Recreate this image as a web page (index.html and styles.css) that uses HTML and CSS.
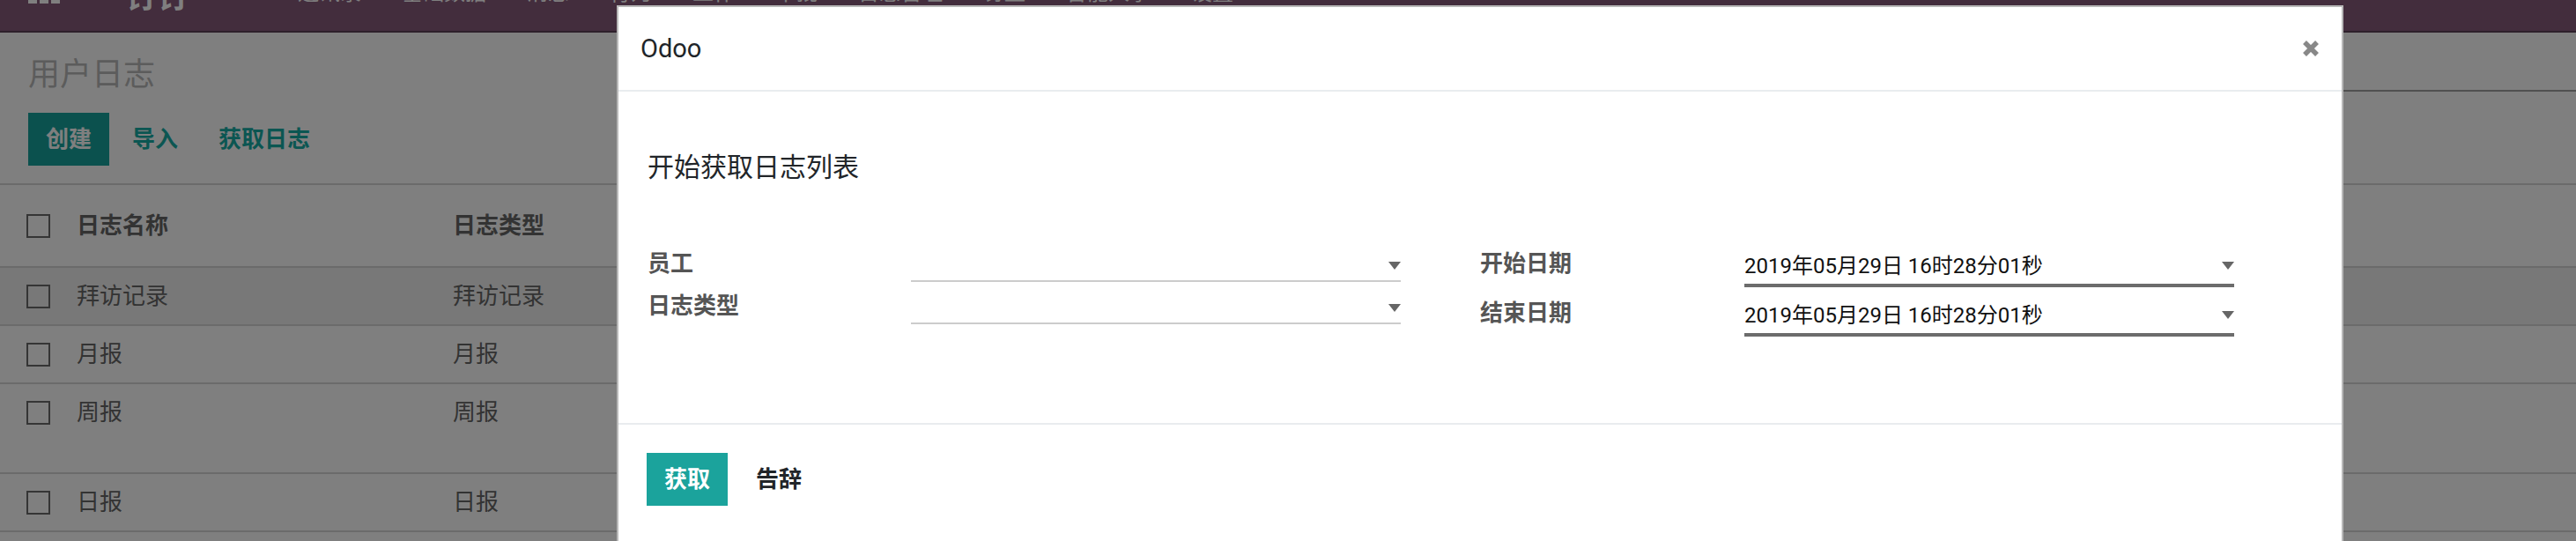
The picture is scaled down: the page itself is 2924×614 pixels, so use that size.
FILE: index.html
```html
<!DOCTYPE html>
<html lang="zh-CN">
<head>
<meta charset="utf-8">
<title>用户日志 - Odoo</title>
<link rel="stylesheet" href="styles.css">
</head>
<body>
<div class="app">
  <header class="navbar">
    <div class="nav-row">
      <span class="apps-icon">
        <svg viewBox="0 0 36 36" aria-hidden="true">
          <rect x="0" y="0" width="10" height="10"/><rect x="13" y="0" width="10" height="10"/><rect x="26" y="0" width="10" height="10"/>
          <rect x="0" y="13" width="10" height="10"/><rect x="13" y="13" width="10" height="10"/><rect x="26" y="13" width="10" height="10"/>
          <rect x="0" y="26" width="10" height="10"/><rect x="13" y="26" width="10" height="10"/><rect x="26" y="26" width="10" height="10"/>
        </svg>
      </span>
      <span class="brand">钉钉</span>
      <ul class="menu">
        <li>通讯录</li><li>基础数据</li><li>消息</li><li>行为</li><li>工作</li><li>审批</li><li>日志管理</li><li>钉盘</li><li>智能人事</li><li>设置</li>
      </ul>
    </div>
  </header>

  <section class="control-panel">
    <div class="cp-top">
      <h1 class="breadcrumb">用户日志</h1>
      <div class="search"></div>
    </div>
    <div class="cp-buttons">
      <button class="btn btn-primary">创建</button>
      <button class="btn btn-link">导入</button>
      <button class="btn btn-link">获取日志</button>
    </div>
  </section>

  <div class="list">
    <div class="list-header">
      <div class="cell-check"><span class="checkbox"></span></div>
      <div class="cell">日志名称</div>
      <div class="cell">日志类型</div>
    </div>
    <div class="list-row hover">
      <div class="cell-check"><span class="checkbox"></span></div>
      <div class="cell">拜访记录</div>
      <div class="cell">拜访记录</div>
    </div>
    <div class="list-row">
      <div class="cell-check"><span class="checkbox"></span></div>
      <div class="cell">月报</div>
      <div class="cell">月报</div>
    </div>
    <div class="list-row tall">
      <div class="cell-check"><span class="checkbox"></span></div>
      <div class="cell">周报</div>
      <div class="cell">周报</div>
    </div>
    <div class="list-row">
      <div class="cell-check"><span class="checkbox"></span></div>
      <div class="cell">日报</div>
      <div class="cell">日报</div>
    </div>
  </div>
</div>

<div class="backdrop"></div>

<div class="modal" role="dialog">
  <div class="modal-header">
    <h4 class="modal-title">Odoo</h4>
    <span class="close" aria-label="关闭">
      <svg viewBox="0 0 20 20" aria-hidden="true"><path d="M3 3 L17 17 M17 3 L3 17"/></svg>
    </span>
  </div>
  <div class="modal-body">
    <p class="intro">开始获取日志列表</p>
    <div class="groups">
      <div class="group group-left">
        <label class="label">员工</label>
        <div class="field"><span class="value"></span><span class="caret"></span></div>
        <label class="label">日志类型</label>
        <div class="field"><span class="value"></span><span class="caret"></span></div>
      </div>
      <div class="group group-right">
        <label class="label">开始日期</label>
        <div class="field date"><span class="value">2019年05月29日 16时28分01秒</span><span class="caret"></span></div>
        <label class="label">结束日期</label>
        <div class="field date"><span class="value">2019年05月29日 16时28分01秒</span><span class="caret"></span></div>
      </div>
    </div>
  </div>
  <div class="modal-footer">
    <button class="mbtn mbtn-primary">获取</button>
    <button class="mbtn mbtn-secondary">告辞</button>
  </div>
</div>
</body>
</html>
```

FILE: styles.css
```css
html, body {
  margin: 0;
  padding: 0;
}
body {
  width: 2924px;
  height: 614px;
  overflow: hidden;
  background: #ffffff;
  font-family: Roboto, "Noto Sans CJK SC", sans-serif;
  color: #4c4c4c;
}

/* ---------- navbar ---------- */
.navbar {
  height: 35px;
  background: #875a7b;
  border-bottom: 2px solid #5c4056;
  overflow: hidden;
}
.nav-row {
  display: flex;
  align-items: flex-start;
  padding-left: 32px;
  margin-top: -32px;
  color: #ffffff;
}
.apps-icon svg {
  display: block;
  width: 36px;
  height: 36px;
  fill: #ffffff;
}
.brand {
  margin-left: 74px;
  margin-top: 11px;
  font-size: 36px;
  line-height: 36px;
  font-weight: 700;
}
.menu {
  display: flex;
  margin: 12px 0 0 101px;
  padding: 0;
  list-style: none;
  font-size: 24px;
  line-height: 24px;
}
.menu li {
  padding: 0 23px;
}

/* ---------- control panel ---------- */
.control-panel {
  padding: 0 0 20px 32px;
  border-bottom: 2px solid #d6d6d6;
}
.cp-top {
  display: flex;
  align-items: flex-start;
  padding-top: 26px;
}
.breadcrumb {
  flex: 0 0 1430px;
  margin: 0;
  font-size: 36px;
  line-height: 44px;
  font-weight: 400;
  color: #b8b8b8;
}
.search {
  flex: 1;
  height: 39px;
  border-bottom: 2px solid #a0a0a0;
}
.cp-buttons {
  display: flex;
  gap: 6px;
  margin-top: 21px;
}
.btn {
  height: 60px;
  padding: 0 20px;
  border: 0;
  background: none;
  font-family: Roboto, "Noto Sans CJK SC", sans-serif;
  font-size: 26px;
  line-height: 60px;
  font-weight: 700;
}
.btn-primary {
  background: #17a29d;
  color: #ffffff;
}
.btn-link {
  color: #17aca5;
}

/* ---------- list ---------- */
.list {
  font-size: 26px;
  color: #666666;
}
.list-header,
.list-row {
  display: grid;
  grid-template-columns: 87px 427px 1fr;
  align-items: start;
  border-bottom: 2px solid #d6d6d6;
}
.list-header {
  height: 92px;
  line-height: 92px;
  font-weight: 700;
}
.list-row {
  height: 64px;
  line-height: 64px;
}
.list-row.tall {
  height: 100px;
}
.list-row.hover {
  background: #f0f0f0;
}
.cell-check {
  display: flex;
  align-items: center;
  padding-left: 30px;
  height: 64px;
}
.list-header .cell-check {
  height: 92px;
}
.checkbox {
  display: block;
  width: 27px;
  height: 27px;
  box-sizing: border-box;
  border: 2px solid #6a6a6a;
}

/* ---------- modal ---------- */
.backdrop {
  position: fixed;
  inset: 0;
  background: rgba(0, 0, 0, 0.5);
  z-index: 10;
}
.modal {
  position: fixed;
  left: 700px;
  top: 6px;
  width: 1960px;
  box-sizing: border-box;
  background: #ffffff;
  border: 2px solid rgba(0, 0, 0, 0.28);
  z-index: 20;
  color: #212529;
}
.modal-header {
  display: flex;
  align-items: center;
  height: 94px;
  padding: 0 25px 0 25px;
  border-bottom: 2px solid #e9ecef;
}
.modal-title {
  flex: 1;
  margin: 0;
  font-size: 29px;
  font-weight: 400;
  line-height: 40px;
}
.close svg {
  display: block;
  width: 20px;
  height: 20px;
  stroke: #888888;
  stroke-width: 5.5;
  fill: none;
}
.modal-body {
  padding: 66px 0 98px 33px;
}
.intro {
  margin: 0;
  font-size: 30px;
  line-height: 40px;
}
.groups {
  display: flex;
  gap: 90px;
  margin-top: 64px;
}
.group {
  display: grid;
  width: 855px;
}
.group-left {
  grid-template-columns: 299px 556px;
  grid-auto-rows: 46px;
  row-gap: 2px;
}
.group-right {
  grid-template-columns: 300px 556px;
  grid-auto-rows: 52px;
  row-gap: 4px;
}
.label {
  font-size: 26px;
  line-height: 50px;
  font-weight: 700;
  color: #555555;
}
.field {
  display: flex;
  align-items: flex-start;
  box-sizing: border-box;
  border-bottom: 2px solid #cccccc;
}
.field.date {
  border-bottom: 4px solid #6c6c6c;
  padding-top: 8px;
}
.value {
  flex: 1;
  font-size: 24px;
  line-height: 40px;
  color: #111111;
}
.caret {
  width: 0;
  height: 0;
  margin-top: 23px;
  border-left: 7px solid transparent;
  border-right: 7px solid transparent;
  border-top: 9px solid #666666;
}
.field.date .caret {
  margin-top: 15px;
}
.modal-footer {
  display: flex;
  gap: 12px;
  padding: 32px 32px 60px;
  border-top: 2px solid #e9ecef;
}
.mbtn {
  height: 60px;
  padding: 0 20px;
  border: 0;
  background: none;
  font-family: Roboto, "Noto Sans CJK SC", sans-serif;
  font-size: 26px;
  line-height: 60px;
  font-weight: 700;
}
.mbtn-primary {
  background: #1ba39c;
  color: #ffffff;
}
.mbtn-secondary {
  color: #212529;
}
```
